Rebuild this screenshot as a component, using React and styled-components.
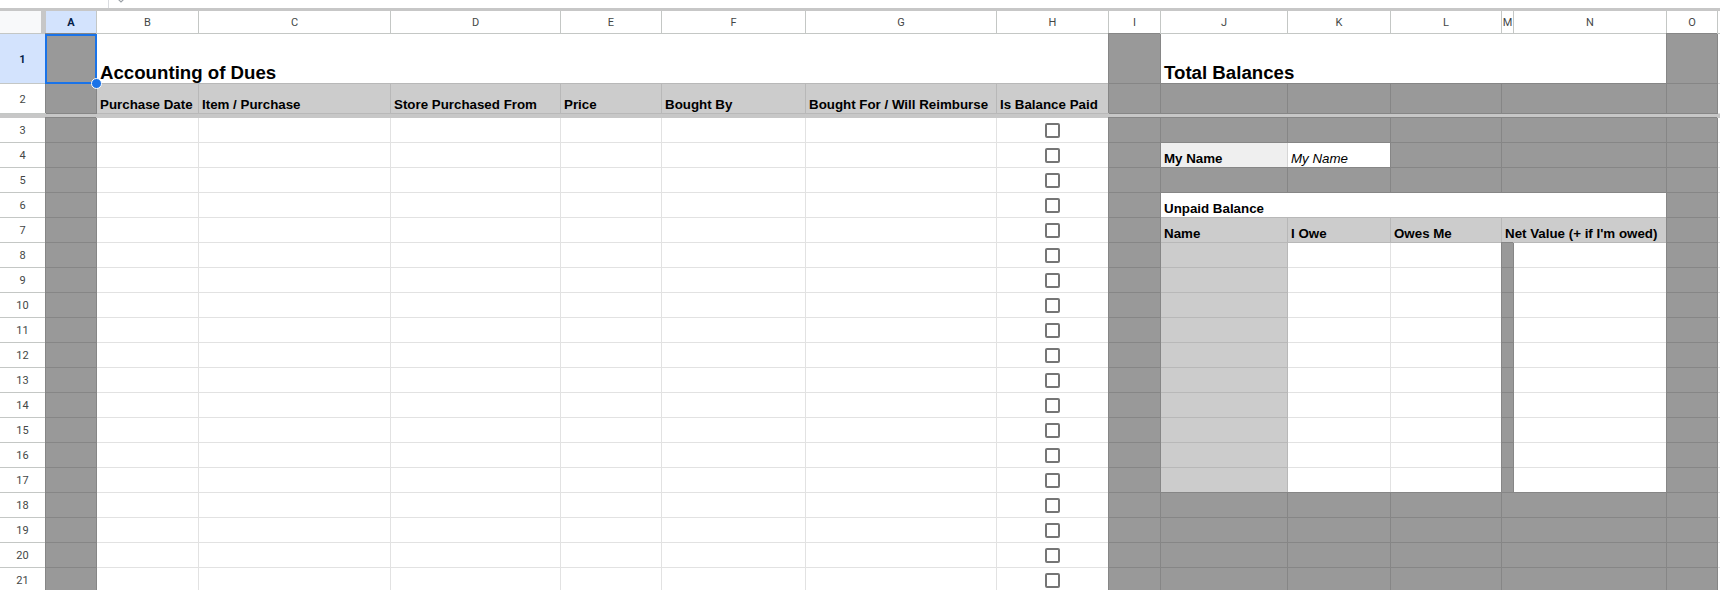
import React from "react";
import styled, { createGlobalStyle, css } from "styled-components";

const GlobalStyle = createGlobalStyle`
  html, body { margin: 0; padding: 0; background: #ffffff; overflow: hidden; }
  body { font-family: "Liberation Sans", Arial, sans-serif; }
`;

const COLS = [51, 102, 192, 170, 101, 144, 191, 112, 52, 127, 103, 111, 12, 153, 51];
const LETTERS = "ABCDEFGHIJKLMNO".split("");

const Page = styled.div`
  width: 1720px;
  height: 590px;
  overflow: hidden;
  display: flex;
  flex-direction: column;
`;

const TopStrip = styled.div`
  height: 8px;
  display: flex;
  align-items: flex-start;
  border-bottom: 3px solid #c7c7c7;
`;

const NameBox = styled.div`
  width: 108px;
  height: 8px;
  border-right: 1px solid #dadce0;
`;

const Chevron = styled.svg`
  margin-left: 8px;
  margin-top: -2px;
`;

const Grid = styled.div`
  display: grid;
  grid-template-columns: 46px ${COLS.map((c) => c + "px").join(" ")} 1fr;
  grid-template-rows: 23px 50px 30px 4px repeat(19, 25px);
`;

const Corner = styled.div`
  background: #f8f9fa;
  border-right: 5px solid #c7c7c7;
  border-bottom: 1px solid #c4c7c5;
  box-sizing: border-box;
`;

const ColHead = styled.div`
  box-sizing: border-box;
  display: flex;
  align-items: center;
  justify-content: center;
  font-family: Roboto, "Liberation Sans", sans-serif;
  font-size: 11px;
  color: #444746;
  background: ${(p) => (p.$sel ? "#d3e3fd" : "#ffffff")};
  font-weight: ${(p) => (p.$sel ? 700 : 400)};
  ${(p) => p.$sel && css`color: #041e49;`}
  border-right: 1px solid #c4c7c5;
  border-bottom: 1px solid #c4c7c5;
  padding-top: 1px;
`;

const RowHead = styled.div`
  box-sizing: border-box;
  display: flex;
  align-items: center;
  justify-content: center;
  font-family: Roboto, "Liberation Sans", sans-serif;
  font-size: 11px;
  color: #444746;
  background: ${(p) => (p.$sel ? "#d3e3fd" : "#ffffff")};
  font-weight: ${(p) => (p.$sel ? 700 : 400)};
  ${(p) => p.$sel && css`color: #041e49;`}
  border-right: 1px solid #c4c7c5;
  border-bottom: 1px solid #c4c7c5;
  padding-top: 1px;
`;

const Freeze = styled.div`
  grid-column: 1 / -1;
  background: #c7c7c7;
`;

const FILL = {
  d: { bg: "#999999", line: "#868686" },
  l: { bg: "#cccccc", line: "#b8b8b8" },
  n: { bg: "#efefef", line: "#d6d6d6" },
  w: { bg: "#ffffff", line: "#e2e2e2" },
};

const Cell = styled.div`
  box-sizing: border-box;
  grid-column: span ${(p) => p.$span || 1};
  display: flex;
  align-items: flex-end;
  justify-content: ${(p) => (p.$center ? "center" : "flex-start")};
  padding: 0 3px 1px 3px;
  white-space: nowrap;
  font-size: 13.33px;
  color: #000000;
  background: ${(p) => FILL[p.$k].bg};
  border-right: 1px solid ${(p) => FILL[p.$k].line};
  border-bottom: 1px solid ${(p) => p.$bb || FILL[p.$k].line};
  ${(p) =>
    p.$k === "d" &&
    css`
      box-shadow: -1px -1px 0 #868686;
    `}
  ${(p) =>
    p.$center &&
    css`
      align-items: center;
      padding: 0;
    `}
  ${(p) =>
    p.$sel &&
    css`
      position: relative;
      z-index: 2;
    `}
`;

const Title = styled.span`
  font-size: 18.67px;
  font-weight: 700;
  margin-bottom: -2px;
`;

const Head = styled.span`
  font-weight: 700;
`;

const Italic = styled.span`
  font-style: italic;
`;

const Checkbox = styled.span`
  box-sizing: border-box;
  width: 15px;
  height: 15px;
  border: 2px solid #757575;
  border-radius: 2px;
  background: #ffffff;
`;

const SelectionBox = styled.div`
  position: absolute;
  top: 0;
  left: -1px;
  right: -1px;
  bottom: -1px;
  border: 2px solid #1a73e8;
  pointer-events: none;
`;

const Handle = styled.div`
  position: absolute;
  right: -6px;
  bottom: -6px;
  width: 11px;
  height: 11px;
  box-sizing: border-box;
  border-radius: 50%;
  background: #1a73e8;
  border: 1.5px solid #ffffff;
`;

const d = (span) => ({ k: "d", span });
const w = (span) => ({ k: "w", span });
const l = (t, span) => ({ k: "l", t, kind: "head", span });
const chk = { k: "w", kind: "check" };
const whites = [w(), w(), w(), w(), w(), w()];

const rows = [];
// Row 1
rows.push([
  { k: "d", sel: true },
  { k: "w", span: 7, t: "Accounting of Dues", kind: "title", bb: "#b8b8b8" },
  d(),
  { k: "w", span: 5, t: "Total Balances", kind: "title", bb: "#b8b8b8" },
  d(),
]);
// Row 2
rows.push([
  d(),
  l("Purchase Date"),
  l("Item / Purchase"),
  l("Store Purchased From"),
  l("Price"),
  l("Bought By"),
  l("Bought For / Will Reimburse"),
  l("Is Balance Paid"),
  d(),
  d(),
  d(),
  d(),
  d(2),
  d(),
]);
const darkRight = [d(), d(), d(), d(), d(2), d()];
// Row 3
rows.push([d(), ...whites, chk, ...darkRight]);
// Row 4
rows.push([
  d(),
  ...whites,
  chk,
  d(),
  { k: "n", t: "My Name", kind: "head" },
  { k: "w", t: "My Name", kind: "italic" },
  d(),
  d(2),
  d(),
]);
// Row 5
rows.push([d(), ...whites, chk, ...darkRight]);
// Row 6
rows.push([
  d(),
  ...whites,
  chk,
  d(),
  { k: "w", span: 5, t: "Unpaid Balance", kind: "head", bb: "#b8b8b8" },
  d(),
]);
// Row 7
rows.push([
  d(),
  ...whites,
  chk,
  d(),
  l("Name"),
  l("I Owe"),
  l("Owes Me"),
  l("Net Value (+ if I'm owed)", 2),
  d(),
]);
// Rows 8-17
for (let i = 8; i <= 17; i++) {
  rows.push([
    d(),
    ...whites,
    chk,
    d(),
    { k: "l" },
    w(),
    w(),
    d(),
    w(),
    d(),
  ]);
}
// Rows 18-21
for (let i = 18; i <= 21; i++) {
  rows.push([d(), ...whites, chk, ...darkRight]);
}

function CellContent({ c }) {
  if (c.kind === "check") return <Checkbox />;
  if (c.kind === "title") return <Title>{c.t}</Title>;
  if (c.kind === "head") return <Head>{c.t}</Head>;
  if (c.kind === "italic") return <Italic>{c.t}</Italic>;
  return null;
}

export default function App() {
  return (
    <Page>
      <GlobalStyle />
      <TopStrip>
        <NameBox />
        <Chevron width="8" height="5" viewBox="0 0 8 5">
          <path d="M1 1 L4 4 L7 1" fill="none" stroke="#9aa0a6" strokeWidth="1.2" />
        </Chevron>
      </TopStrip>
      <Grid>
        <Corner />
        {LETTERS.map((L, i) => (
          <ColHead key={L} $sel={i === 0}>
            {L}
          </ColHead>
        ))}
        <ColHead />
        {rows.map((r, ri) => (
          <React.Fragment key={ri}>
            {ri === 2 && <Freeze />}
            <RowHead $sel={ri === 0}>{ri + 1}</RowHead>
            {r.map((c, ci) => (
              <Cell
                key={ci}
                $k={c.k}
                $span={c.span}
                $bb={c.bb}
                $center={c.kind === "check"}
                $sel={c.sel}
              >
                <CellContent c={c} />
                {c.sel && (
                  <>
                    <SelectionBox />
                    <Handle />
                  </>
                )}
              </Cell>
            ))}
            <Cell $k="w" />
          </React.Fragment>
        ))}
      </Grid>
    </Page>
  );
}
